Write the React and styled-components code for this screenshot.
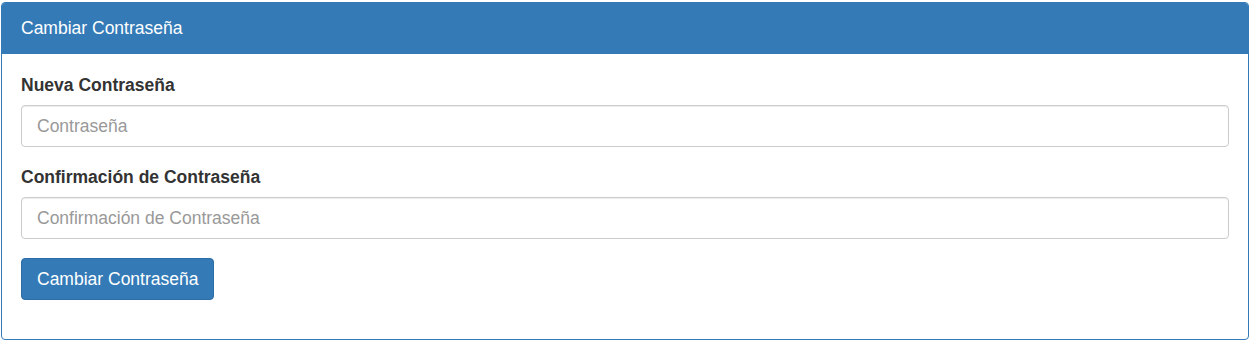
import React, { useState } from 'react';
import styled, { createGlobalStyle } from 'styled-components';

const GlobalStyle = createGlobalStyle`
  * { box-sizing: border-box; }
  body {
    margin: 0;
    background: #fff;
    font-family: "Liberation Sans", Arial, sans-serif;
    font-size: 17.5px;
    color: #333;
  }
`;

const Page = styled.div`
  padding: 2px 2px 0 1px;
`;

const Panel = styled.div`
  border: 1px solid #337ab7;
  border-radius: 4px;
  background: #fff;
`;

const PanelHeading = styled.div`
  background: #337ab7;
  color: #fff;
  padding: 14px 19px 15px;
  line-height: 22px;
  font-size: 17.5px;
  border-top-left-radius: 3px;
  border-top-right-radius: 3px;
`;

const PanelBody = styled.form`
  padding: 20px 19px 20px;
`;

const FormGroup = styled.div`
  margin-bottom: 19px;
`;

const Label = styled.label`
  display: block;
  font-weight: bold;
  line-height: 23px;
  margin-bottom: 8px;
`;

const Input = styled.input`
  display: block;
  width: 100%;
  height: 42px;
  padding: 8px 15px;
  font-family: inherit;
  font-size: 17.5px;
  color: #555;
  border: 1px solid #ccc;
  border-radius: 4px;
  box-shadow: inset 0 1px 1px rgba(0, 0, 0, 0.075);

  &::placeholder {
    color: #999;
  }

  &:focus {
    outline: none;
    border-color: #66afe9;
  }
`;

const Button = styled.button`
  height: 42px;
  padding: 0 15px;
  font-family: inherit;
  font-size: 17.5px;
  color: #fff;
  background: #337ab7;
  border: 1px solid #2e6da4;
  border-radius: 4px;
  cursor: pointer;

  &:hover {
    background: #286090;
  }
`;

function App() {
  const [password, setPassword] = useState('');
  const [confirm, setConfirm] = useState('');

  return (
    <Page>
      <GlobalStyle />
      <Panel>
        <PanelHeading>Cambiar Contraseña</PanelHeading>
        <PanelBody onSubmit={(e) => e.preventDefault()}>
          <FormGroup>
            <Label htmlFor="password">Nueva Contraseña</Label>
            <Input
              type="password"
              id="password"
              placeholder="Contraseña"
              value={password}
              onChange={(e) => setPassword(e.target.value)}
            />
          </FormGroup>
          <FormGroup>
            <Label htmlFor="confirm">Confirmación de Contraseña</Label>
            <Input
              type="password"
              id="confirm"
              placeholder="Confirmación de Contraseña"
              value={confirm}
              onChange={(e) => setConfirm(e.target.value)}
            />
          </FormGroup>
          <FormGroup>
            <Button type="submit">Cambiar Contraseña</Button>
          </FormGroup>
        </PanelBody>
      </Panel>
    </Page>
  );
}

export default App;
